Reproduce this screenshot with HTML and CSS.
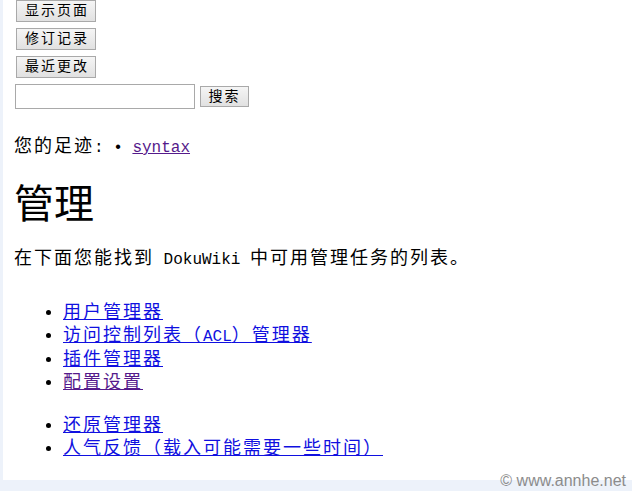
FILE: index.html
```html
<!DOCTYPE html>
<html lang="zh">
<head>
  <meta charset="UTF-8" />
  <title>管理 [DokuWiki]</title>
  <link rel="stylesheet" href="styles.css">
</head>
<body>

<div class="page">
  <div class="tools">
    <form class="button"><button type="submit">显示页面</button></form>
    <form class="button"><button type="submit">修订记录</button></form>
    <form class="button"><button type="submit">最近更改</button></form>
    <form class="search">
      <input type="text" name="id">
      <button type="submit">搜索</button>
    </form>
  </div>

  <div class="breadcrumbs">您的足迹<span class="lat">: • </span><a class="lat visited" href="#">syntax</a></div>

  <h1>管理</h1>
  <p>在下面您能找到<span class="lat"> DokuWiki </span>中可用管理任务的列表。</p>

  <ul class="admin_tasks">
    <li><a href="#">用户管理器</a></li>
    <li><a href="#">访问控制列表（<span class="lat">ACL</span>）管理器</a></li>
    <li><a href="#">插件管理器</a></li>
    <li><a class="visited" href="#">配置设置</a></li>
  </ul>

  <ul class="admin_tasks">
    <li><a href="#">还原管理器</a></li>
    <li><a href="#">人气反馈（载入可能需要一些时间）</a></li>
  </ul>
</div>

<div class="watermark">© www.annhe.net</div>

</body>
</html>
```

FILE: styles.css
```css
body {
  margin: 0;
  background: #edf2fa;
  font-family: 'Liberation Mono', 'Noto Sans CJK SC', monospace;
  font-size: 18px;
  letter-spacing: 2px;
  color: #000;
  position: relative;
  height: 491px;
  overflow: hidden;
}
.page {
  margin-left: 3px;
  height: 480px;
  background: #fff;
  padding-left: 12px;
  box-sizing: border-box;
  overflow: hidden;
}
.lat {
  font-size: 16px;
  letter-spacing: 0;
}
.tools {
  display: flex;
  flex-direction: column;
  align-items: flex-start;
  gap: 6px;
}
form {
  margin: 0;
}
button {
  font-family: 'Liberation Mono', 'Noto Sans CJK SC', monospace;
  font-size: 14px;
  letter-spacing: 2px;
  line-height: 1;
  height: 22px;
  padding: 0 6px 0 8px;
  border: 1px solid #a9a9a9;
  border-radius: 0;
  background: linear-gradient(#f5f5f5, #e1e1e1);
  color: #000;
}
.button button {
  margin-left: 1px;
}
.search {
  display: flex;
  align-items: center;
}
.search input {
  width: 180px;
  height: 25px;
  box-sizing: border-box;
  border: 1px solid #a9a9a9;
  margin: 0;
}
.search button {
  margin-left: 5px;
  width: 49px;
  height: 21px;
  padding: 0;
}
.breadcrumbs {
  margin-top: 28px;
  line-height: 20px;
  margin-left: -1px;
}
a {
  color: #1010e0;
}
a.visited {
  color: #551a8b;
}
h1 {
  font-size: 40px;
  letter-spacing: 0;
  font-weight: normal;
  line-height: 44px;
  margin: 28px 0 0 -1px;
}
p {
  line-height: 20px;
  margin: 19px 0 0 -1px;
}
.admin_tasks {
  line-height: 23px;
  margin: 32px 0 0;
  padding-left: 48px;
}
.admin_tasks + .admin_tasks {
  margin-top: 20px;
}
.watermark {
  position: absolute;
  right: 6px;
  bottom: 1px;
  font-family: 'Liberation Sans', sans-serif;
  font-size: 16px;
  letter-spacing: 0;
  color: #8c8c8c;
}
```
